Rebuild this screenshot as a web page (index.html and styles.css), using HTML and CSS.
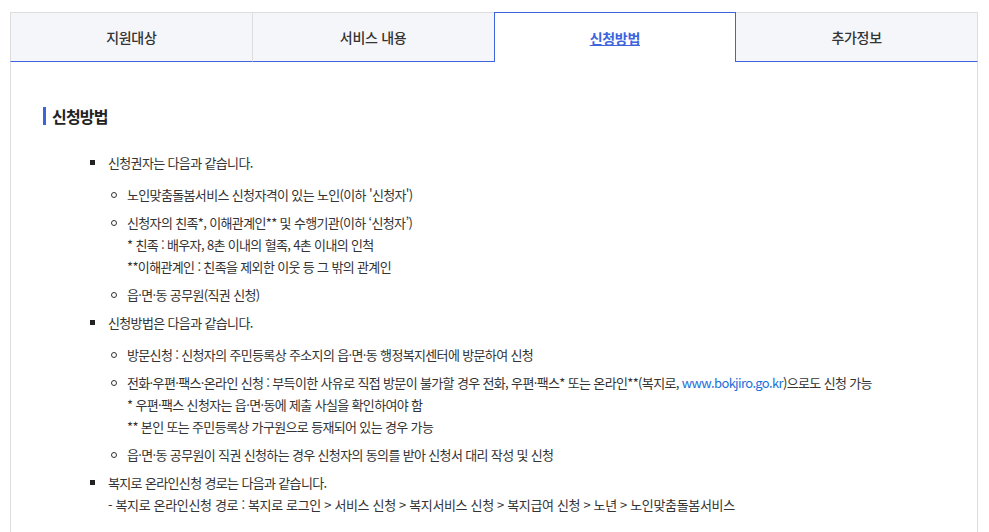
FILE: index.html
```html
<!DOCTYPE html>
<html lang="ko">
<head>
    <meta charset="UTF-8">
    <meta name="viewport" content="width=device-width, initial-scale=1.0">
    <title>신청방법</title>
    <link rel="stylesheet" href="styles.css">
</head>
<body>

    <div class="wrap">
        <!-- 탭 메뉴 -->
        <ul class="tabs">
            <li>지원대상</li>
            <li>서비스 내용</li>
            <li class="active"><a href="#">신청방법</a></li>
            <li>추가정보</li>
        </ul>

        <!-- 탭 내용 -->
        <div class="tab-content">
            <h3 class="tit">신청방법</h3>
            <ul class="list-sq">
                <li>신청권자는 다음과 같습니다.
                    <ul class="list-ci">
                        <li>노인맞춤돌봄서비스 신청자격이 있는 노인(이하 '신청자')</li>
                        <li>신청자의 친족*, 이해관계인** 및 수행기관(이하 ‘신청자’)<br>
                            * 친족 : 배우자, 8촌 이내의 혈족, 4촌 이내의 인척<br>
                            **이해관계인 : 친족을 제외한 이웃 등 그 밖의 관계인</li>
                        <li>읍·면·동 공무원(직권 신청)</li>
                    </ul>
                </li>
                <li>신청방법은 다음과 같습니다.
                    <ul class="list-ci">
                        <li>방문신청 : 신청자의 주민등록상 주소지의 읍·면·동 행정복지센터에 방문하여 신청</li>
                        <li>전화·우편·팩스·온라인 신청 : 부득이한 사유로 직접 방문이 불가할 경우 전화, 우편·팩스* 또는 온라인**(복지로, <a href="#" class="link">www.bokjiro.go.kr</a>)으로도 신청 가능<br>
                            * 우편·팩스 신청자는 읍·면·동에 제출 사실을 확인하여야 함<br>
                            ** 본인 또는 주민등록상 가구원으로 등재되어 있는 경우 가능</li>
                        <li>읍·면·동 공무원이 직권 신청하는 경우 신청자의 동의를 받아 신청서 대리 작성 및 신청</li>
                    </ul>
                </li>
                <li>복지로 온라인신청 경로는 다음과 같습니다.<br>
                    <span class="path">- 복지로 온라인신청 경로 : 복지로 로그인 &gt; 서비스 신청 &gt; 복지서비스 신청 &gt; 복지급여 신청 &gt; 노년 &gt; 노인맞춤돌봄서비스</span></li>
            </ul>
        </div>
    </div>

</body>
</html>
```

FILE: styles.css
```css
body { margin: 0; font-family: "Noto Sans CJK KR", "Noto Sans", sans-serif; color: #333; background: #fff; }
ul { list-style: none; margin: 0; padding: 0; }
a { color: inherit; }

.wrap { width: 968px; margin: 12px 0 0 10px; }

/* 탭 메뉴 */
.tabs { display: flex; height: 50px; }
.tabs li { flex: 1; display: flex; align-items: center; justify-content: center; font-size: 14px; font-weight: 500; color: #333; letter-spacing: -0.3px; background: #f5f6fa; border-top: 1px solid #ddd; border-right: 1px solid #ddd; border-bottom: 1px solid #3d63dd; }
.tabs li:first-child { border-left: 1px solid #ddd; }
.tabs li.active { background: #fff; border: 1px solid #3d63dd; border-bottom: none; margin-left: -1px; }
.tabs li.active a { color: #3d63dd; font-weight: 700; text-decoration: underline; }

/* 탭 내용 */
.tab-content { border-left: 1px solid #ddd; border-right: 1px solid #ddd; padding: 45px 32px 20px 32px; font-size: 13px; line-height: 22px; letter-spacing: -0.65px; }
.tit { margin: 0 0 27px 0; font-size: 16px; line-height: 18px; font-weight: 700; color: #222; letter-spacing: -0.8px; padding-left: 6px; border-left: 3px solid #3d63dd; }

.list-sq > li { position: relative; padding-left: 65px; margin-top: 6px; }
.list-sq > li:first-child { margin-top: 0; }
.list-sq > li::before { content: ""; position: absolute; left: 47px; top: 8px; width: 5px; height: 5px; background: #222; }

.list-ci { margin-top: 10px; }
.list-ci > li { position: relative; padding-left: 19px; margin-top: 6px; }
.list-ci > li:first-child { margin-top: 0; }
.list-ci > li::before { content: ""; position: absolute; left: 3px; top: 8px; width: 4px; height: 4px; border: 1px solid #333; border-radius: 50%; }

.path { letter-spacing: -0.35px; }
.link { color: #1a6fd8; text-decoration: none; }
```
